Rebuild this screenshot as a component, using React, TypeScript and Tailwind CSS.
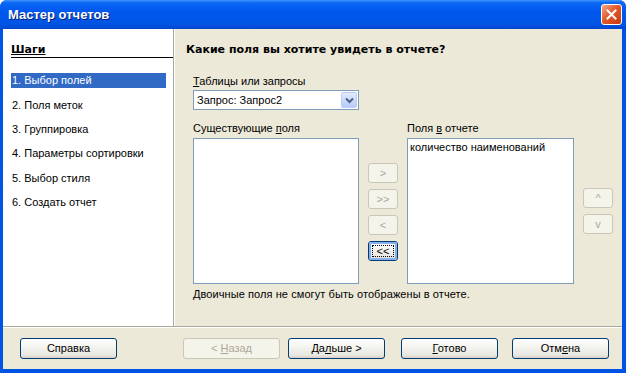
import { ReactNode } from "react";

const font = { fontFamily: '"Liberation Sans", "DejaVu Sans", sans-serif' };
const boldFont = { fontFamily: '"DejaVu Sans", "Liberation Sans", sans-serif' };

type BtnProps = {
  children: ReactNode;
  disabled?: boolean;
  focused?: boolean;
  className?: string;
};

function XpButton({ children, disabled, focused, className = "" }: BtnProps) {
  const base = "flex items-center justify-center rounded-[3px] border text-[11px] leading-none";
  const look = disabled
    ? "border-[#c9c7ba] bg-[#f5f4ea] text-[#aca899]"
    : "border-[#003c74] bg-[linear-gradient(to_bottom,#ffffff_0%,#f4f4f0_40%,#e8e7e0_85%,#d6d0c5_100%)] text-black";
  return (
    <div className={`${base} ${look} ${className}`}>
      {focused ? (
        <div className="flex h-full w-full items-center justify-center rounded-[2px] border-2 border-[#8ab0ec] p-px">
          <div className="flex h-full w-full items-center justify-center border border-dotted border-black">
            <span>{children}</span>
          </div>
        </div>
      ) : (
        <span>{children}</span>
      )}
    </div>
  );
}

const steps = [
  "1. Выбор полей",
  "2. Поля меток",
  "3. Группировка",
  "4. Параметры сортировки",
  "5. Выбор стиля",
  "6. Создать отчет",
];

export default function App() {
  return (
    <div
      className="flex h-[373px] w-[626px] flex-col overflow-hidden rounded-t-[7px] bg-[#0054e3] text-black"
      style={font}
    >
      {/* title bar */}
      <div className="flex h-[29px] shrink-0 items-center justify-between bg-[linear-gradient(to_bottom,#3d95ff_0%,#0a66f2_10%,#0058ee_40%,#0054e3_85%,#0046cc_100%)] pl-[8px] pr-[4px]">
        <span className="text-[13px] font-bold text-white [text-shadow:1px_1px_0_#0a1e6e]">
          Мастер отчетов
        </span>
        <div className="flex h-[21px] w-[21px] items-center justify-center rounded-[3px] border border-white bg-[linear-gradient(135deg,#f4a488_0%,#e25a2c_45%,#c8380e_100%)]">
          <svg width="11" height="11" viewBox="0 0 11 11">
            <path d="M1.5 1.5 L9.5 9.5 M9.5 1.5 L1.5 9.5" stroke="white" strokeWidth="2" strokeLinecap="square" />
          </svg>
        </div>
      </div>

      {/* client */}
      <div className="ml-[3px] mr-[4px] mb-[4px] flex flex-1 flex-col bg-[#ece9d8]">
        <div className="flex h-[298px] border-b border-[#aca899]">
          {/* steps */}
          <div className="flex w-[171px] flex-col border-r border-[#aca899] bg-white pl-[8px] pt-[14px]">
            <div className="border-b border-black pb-[1px] text-[11px] font-bold leading-[13px] underline" style={boldFont}>
              Шаги
            </div>
            <div className="mt-[15px] flex flex-col gap-[9.4px]">
              {steps.map((s, i) => (
                <div
                  key={s}
                  className={`flex h-[15px] w-[155px] items-center pl-px text-[11px] ${
                    i === 0 ? "bg-[#316ac5] text-white" : "text-black"
                  }`}
                >
                  {s}
                </div>
              ))}
            </div>
          </div>

          {/* content */}
          <div className="flex flex-1 flex-col border-l border-white pl-[18px] pt-[14px]">
            <div className="-ml-[7px] text-[11px] font-bold leading-[13px]" style={boldFont}>
              Какие поля вы хотите увидеть в отчете?
            </div>
            <div className="mt-[19px] text-[11px] leading-[13px]">
              <u>Т</u>аблицы или запросы
            </div>
            <div className="mt-[2px] flex h-[20px] w-[166px] items-center justify-between border border-[#7f9db9] bg-white pl-[3px] pr-px">
              <span className="text-[11px]">Запрос: Запрос2</span>
              <div className="flex h-[16px] w-[16px] items-center justify-center rounded-[2px] border border-[#b9cdf6] bg-[linear-gradient(to_bottom,#e2ebfe,#b6cbf8)]">
                <svg width="9" height="7" viewBox="0 0 9 7">
                  <path d="M1 1.5 L4.5 5 L8 1.5" stroke="#4d6185" strokeWidth="2" fill="none" />
                </svg>
              </div>
            </div>

            <div className="mt-[12px] flex text-[11px] leading-[13px]">
              <div className="w-[214px]">
                Существующие <u>п</u>оля
              </div>
              <div>
                Поля <u>в</u> отчете
              </div>
            </div>

            <div className="mt-[3px] flex">
              <div className="h-[146px] w-[166px] border border-[#7f9db9] bg-white" />
              <div className="ml-[9px] flex w-[30px] flex-col gap-[6px] pt-[25px]">
                <XpButton disabled className="h-[20px]">&gt;</XpButton>
                <XpButton disabled className="h-[20px]">&gt;&gt;</XpButton>
                <XpButton disabled className="h-[20px]">&lt;</XpButton>
                <XpButton focused className="h-[20px]">&lt;&lt;</XpButton>
              </div>
              <div className="ml-[9px] h-[146px] w-[167px] border border-[#7f9db9] bg-white pl-[2px] pt-[2px] text-[11px] leading-[13px]">
                количество наименований
              </div>
              <div className="ml-[9px] flex w-[30px] flex-col gap-[6px] pt-[50px]">
                <XpButton disabled className="h-[20px]">^</XpButton>
                <XpButton disabled className="h-[20px]">v</XpButton>
              </div>
            </div>

            <div className="mt-[4px] text-[11px] leading-[13px] tracking-[0.08px]">
              Двоичные поля не смогут быть отображены в отчете.
            </div>
          </div>
        </div>

        {/* buttons */}
        <div className="flex flex-1 items-start border-t border-white pl-[17px] pt-[10px]">
          <XpButton className="h-[21px] w-[97px]">Справка</XpButton>
          <XpButton disabled className="ml-[66px] h-[21px] w-[97px]">
            &lt; <u>Н</u>азад
          </XpButton>
          <XpButton className="ml-[8px] h-[21px] w-[97px]">
            Да<u>л</u>ьше &gt;
          </XpButton>
          <XpButton className="ml-[16px] h-[21px] w-[97px]">
            <u>Г</u>отово
          </XpButton>
          <XpButton className="ml-[14px] h-[21px] w-[97px]">
            Отм<u>е</u>на
          </XpButton>
        </div>
      </div>
    </div>
  );
}
